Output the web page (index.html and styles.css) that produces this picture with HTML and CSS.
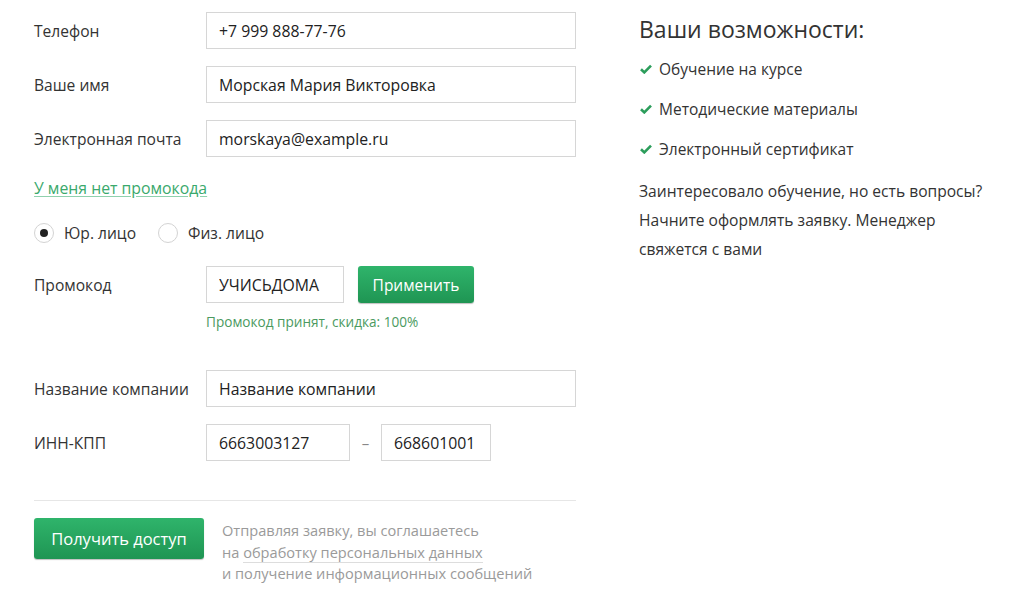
FILE: index.html
```html
<!DOCTYPE html>
<html>
  <head>
    <meta charset="utf-8" />
    <title>Оформление заявки</title>
    <link rel="stylesheet" href="styles.css">
  </head>

  <body>
    <div class="page">
      <form class="order">
        <div class="row">
          <label class="label">Телефон</label>
          <input class="field wide" type="text" value="+7 999 888-77-76" />
        </div>
        <div class="row">
          <label class="label">Ваше имя</label>
          <input class="field wide" type="text" value="Морская Мария Викторовка" />
        </div>
        <div class="row">
          <label class="label">Электронная почта</label>
          <input class="field wide" type="text" value="morskaya@example.ru" />
        </div>

        <a class="no-promo" href="#">У меня нет промокода</a>

        <div class="kind">
          <label class="radio"><span class="dot checked"></span>Юр. лицо</label>
          <label class="radio"><span class="dot"></span>Физ. лицо</label>
        </div>

        <div class="row promo">
          <label class="label">Промокод</label>
          <input class="field short" type="text" value="УЧИСЬДОМА" />
          <button class="btn apply" type="button">Применить</button>
        </div>
        <p class="promo-ok">Промокод принят, скидка: 100%</p>

        <div class="row company">
          <label class="label">Название компании</label>
          <input class="field wide" type="text" value="Название компании" />
        </div>
        <div class="row">
          <label class="label">ИНН-КПП</label>
          <input class="field inn" type="text" value="6663003127" />
          <span class="dash">–</span>
          <input class="field kpp" type="text" value="668601001" />
        </div>

        <div class="submit">
          <button class="btn get" type="button">Получить доступ</button>
          <p class="agree">
            Отправляя заявку, вы соглашаетесь<br />
            на <a href="#">обработку персональных данных</a><br />
            и получение информационных сообщений
          </p>
        </div>
      </form>

      <div class="features">
        <h2>Ваши возможности:</h2>
        <ul>
          <li><svg class="check" viewBox="0 0 12 10"><path d="M1 5.2 L4.3 8.4 L11 1.6" /></svg>Обучение на курсе</li>
          <li><svg class="check" viewBox="0 0 12 10"><path d="M1 5.2 L4.3 8.4 L11 1.6" /></svg>Методические материалы</li>
          <li><svg class="check" viewBox="0 0 12 10"><path d="M1 5.2 L4.3 8.4 L11 1.6" /></svg>Электронный сертификат</li>
        </ul>
        <p>Заинтересовало обучение, но есть вопросы? Начните оформлять заявку. Менеджер свяжется с вами</p>
      </div>
    </div>
  </body>
</html>
```

FILE: styles.css
```css
* {
  font-family: 'Open Sans', 'Noto Sans', sans-serif;
  box-sizing: border-box;
}

html,
body {
  margin: 0;
  padding: 0;
  background-color: #fff;
  color: #333;
}

.page {
  display: flex;
  gap: 63px;
  padding: 12px 0 0 34px;
}

.order {
  width: 542px;
  display: flex;
  flex-direction: column;
}

.row {
  display: flex;
  align-items: center;
  margin-bottom: 17px;
}

.label {
  width: 172px;
  font-size: 15.6px;
  color: #333;
}

.field {
  height: 37px;
  border: 1px solid #d6d6d6;
  padding: 0 12px;
  font-size: 15.8px;
  color: #222;
  outline: none;
}

.field.wide {
  width: 370px;
}

.field.short {
  width: 138px;
}

.field.inn {
  width: 144px;
}

.field.kpp {
  width: 110px;
}

.dash {
  width: 31px;
  text-align: center;
  color: #888;
  font-size: 15px;
}

.no-promo {
  font-size: 15.8px;
  color: #3aa96c;
  text-decoration: underline;
  text-decoration-color: #8fd1ad;
  text-underline-offset: 2px;
  margin: 3px 0 23px;
  align-self: flex-start;
}

.kind {
  display: flex;
  gap: 22px;
  margin-bottom: 22px;
}

.radio {
  display: flex;
  align-items: center;
  gap: 10px;
  font-size: 15.6px;
}

.dot {
  width: 20px;
  height: 20px;
  border: 1px solid #d3d3d3;
  border-radius: 50%;
  display: flex;
  align-items: center;
  justify-content: center;
}

.dot.checked::after {
  content: '';
  width: 8px;
  height: 8px;
  border-radius: 50%;
  background-color: #222;
}

.btn {
  border: 0;
  outline: none;
  color: #fff;
  cursor: pointer;
  border-radius: 3px;
  background: linear-gradient(#2fb46b, #1f9553);
  box-shadow: 0 1px 1px rgba(0, 0, 0, 0.25);
}

.apply {
  margin-left: 14px;
  width: 116px;
  height: 37px;
  font-size: 15.5px;
}

.promo {
  margin-bottom: 9px;
}

.promo-ok {
  margin: 0 0 39px 172px;
  font-size: 13.6px;
  color: #4b9a5f;
}

.company {
  margin-bottom: 17px;
}

.submit {
  display: flex;
  align-items: flex-start;
  gap: 18px;
  margin-top: 22px;
  padding-top: 17px;
  border-top: 1px solid #e6e6e6;
}

.get {
  width: 170px;
  height: 41px;
  font-size: 16.5px;
}

.agree {
  margin: 2px 0 0;
  font-size: 14.6px;
  line-height: 21.5px;
  color: #9a9a9a;
}

.agree a {
  color: #9a9a9a;
  text-decoration: none;
  border-bottom: 1px solid #ddd;
}

.features {
  width: 350px;
}

.features h2 {
  margin: 1px 0 4px;
  font-size: 23px;
  font-weight: normal;
  color: #333;
}

.features ul {
  list-style: none;
  margin: 0;
  padding: 0;
}

.features li {
  display: flex;
  align-items: center;
  height: 40px;
  font-size: 15.5px;
}

.check {
  width: 12px;
  height: 10px;
  margin: 0 7px 0 1px;
  fill: none;
  stroke: #2c9d5b;
  stroke-width: 2.6;
}

.features p {
  margin: 8px 0 0;
  font-size: 15.6px;
  line-height: 29px;
}
```
